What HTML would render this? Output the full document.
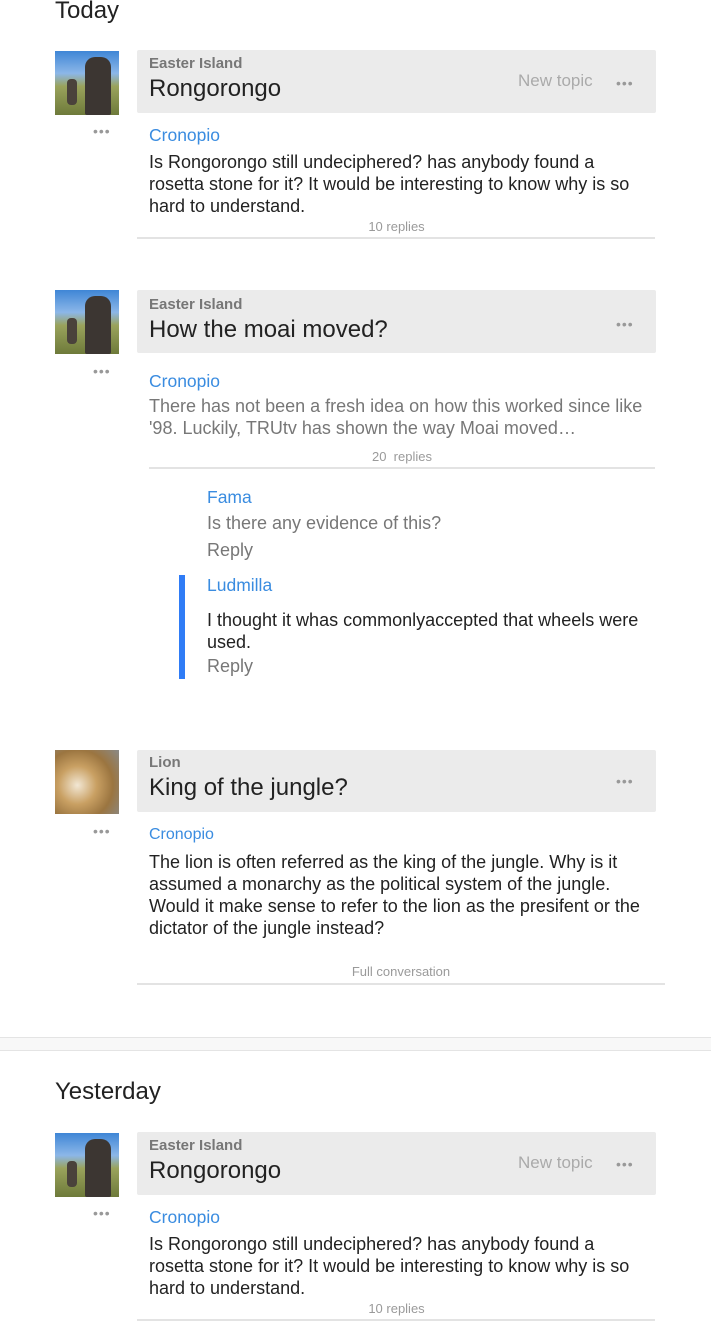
<!DOCTYPE html>
<html><head><meta charset="utf-8"><style>
*{margin:0;padding:0;box-sizing:border-box}
body{width:711px;height:1322px;position:relative;background:#fff;font-family:"Liberation Sans",Arial,sans-serif;overflow:hidden;color:#222}
.a{position:absolute;white-space:nowrap;line-height:22px}
.h{font-size:24px;color:#222;line-height:30px}
.day{font-size:24px;color:#222;line-height:30px}
.cat{font-size:15px;font-weight:bold;color:#777}
.blue{color:#3a8ce0;font-size:17.5px}
.body{font-size:18px;color:#222}
.gray{color:#777}
.rep{font-size:13px;color:#9a9a9a;text-align:center}
.box{position:absolute;left:137px;width:519px;height:63px;background:#ebebeb;border-radius:2px}
.dots{position:absolute;color:#999;font-size:14px;letter-spacing:1px;line-height:10px}
.line{position:absolute;height:2px;background:#e3e3e3}
.moai{position:absolute;left:55px;width:64px;height:64px;overflow:hidden;background:linear-gradient(180deg,#3f86d6 0%,#8cb7e8 35%,#9aa35c 55%,#6e7a3a 100%)}
.moai:before{content:"";position:absolute;left:30px;top:6px;width:26px;height:58px;background:#3c3632;border-radius:10px 10px 2px 2px}
.moai:after{content:"";position:absolute;left:12px;top:28px;width:10px;height:26px;background:#4a423b;border-radius:4px}
.lion{position:absolute;left:55px;width:64px;height:64px;background:radial-gradient(circle at 35% 55%,#f2e7d4 0%,#c9a063 35%,#9b7540 65%,#8a8a88 100%)}
</style></head><body>

<div class="a day" style="left:55px;top:-4px">Today</div>

<div class="moai" style="top:51px"></div>
<div class="dots" style="left:93px;top:126px">•••</div>
<div class="box" style="top:50px"></div>
<div class="a cat" style="left:149px;top:53px">Easter Island</div>
<div class="a h" style="left:149px;top:74px">Rongorongo</div>
<div class="a" style="left:518px;top:70px;font-size:17px;color:#aaa">New topic</div>
<div class="dots" style="left:616px;top:78px">•••</div>
<div class="a blue" style="left:149px;top:124px">Cronopio</div>
<div class="a body" style="left:149px;top:151px">Is Rongorongo still undeciphered? has anybody found a</div>
<div class="a body" style="left:149px;top:173px">rosetta stone for it? It would be interesting to know why is so</div>
<div class="a body" style="left:149px;top:195px">hard to understand.</div>
<div class="a rep" style="left:137px;width:519px;top:216px">10 replies</div>
<div class="line" style="left:137px;width:518px;top:237px"></div>

<div class="moai" style="top:290px"></div>
<div class="dots" style="left:93px;top:366px">•••</div>
<div class="box" style="top:290px"></div>
<div class="a cat" style="left:149px;top:294px">Easter Island</div>
<div class="a h" style="left:149px;top:315px">How the moai moved?</div>
<div class="dots" style="left:616px;top:319px">•••</div>
<div class="a blue" style="left:149px;top:370px">Cronopio</div>
<div class="a body gray" style="left:149px;top:395px">There has not been a fresh idea on how this worked since like</div>
<div class="a body gray" style="left:149px;top:417px">'98. Luckily, TRUtv has shown the way Moai moved…</div>
<div class="a rep" style="left:149px;width:506px;top:446px">20&nbsp; replies</div>
<div class="line" style="left:149px;width:506px;top:467px"></div>

<div class="a blue" style="left:207px;top:486px">Fama</div>
<div class="a body gray" style="left:207px;top:512px">Is there any evidence of this?</div>
<div class="a body gray" style="left:207px;top:539px">Reply</div>
<div style="position:absolute;left:179px;top:575px;width:6px;height:104px;background:#2f7cf6"></div>
<div class="a blue" style="left:207px;top:574px">Ludmilla</div>
<div class="a body" style="left:207px;top:609px">I thought it whas commonlyaccepted that wheels were</div>
<div class="a body" style="left:207px;top:631px">used.</div>
<div class="a body gray" style="left:207px;top:655px">Reply</div>

<div class="lion" style="top:750px"></div>
<div class="dots" style="left:93px;top:826px">•••</div>
<div class="box" style="top:750px;height:62px"></div>
<div class="a cat" style="left:149px;top:752px">Lion</div>
<div class="a h" style="left:149px;top:773px">King of the jungle?</div>
<div class="dots" style="left:616px;top:776px">•••</div>
<div class="a blue" style="left:149px;top:824px;font-size:16px">Cronopio</div>
<div class="a body" style="left:149px;top:851px">The lion is often referred as the king of the jungle. Why is it</div>
<div class="a body" style="left:149px;top:873px">assumed a monarchy as the political system of the jungle.</div>
<div class="a body" style="left:149px;top:895px">Would it make sense to refer to the lion as the presifent or the</div>
<div class="a body" style="left:149px;top:917px">dictator of the jungle instead?</div>
<div class="a rep" style="left:137px;width:528px;top:961px">Full conversation</div>
<div class="line" style="left:137px;width:528px;top:983px"></div>

<div style="position:absolute;left:0;top:1037px;width:711px;height:14px;background:#f8f8f8;border-top:1px solid #e4e4e4;border-bottom:1px solid #e4e4e4"></div>

<div class="a day" style="left:55px;top:1077px">Yesterday</div>

<div class="moai" style="top:1133px"></div>
<div class="dots" style="left:93px;top:1208px">•••</div>
<div class="box" style="top:1132px"></div>
<div class="a cat" style="left:149px;top:1135px">Easter Island</div>
<div class="a h" style="left:149px;top:1156px">Rongorongo</div>
<div class="a" style="left:518px;top:1152px;font-size:17px;color:#aaa">New topic</div>
<div class="dots" style="left:616px;top:1159px">•••</div>
<div class="a blue" style="left:149px;top:1206px">Cronopio</div>
<div class="a body" style="left:149px;top:1233px">Is Rongorongo still undeciphered? has anybody found a</div>
<div class="a body" style="left:149px;top:1255px">rosetta stone for it? It would be interesting to know why is so</div>
<div class="a body" style="left:149px;top:1277px">hard to understand.</div>
<div class="a rep" style="left:137px;width:519px;top:1298px">10 replies</div>
<div class="line" style="left:137px;width:518px;top:1319px"></div>

</body></html>
